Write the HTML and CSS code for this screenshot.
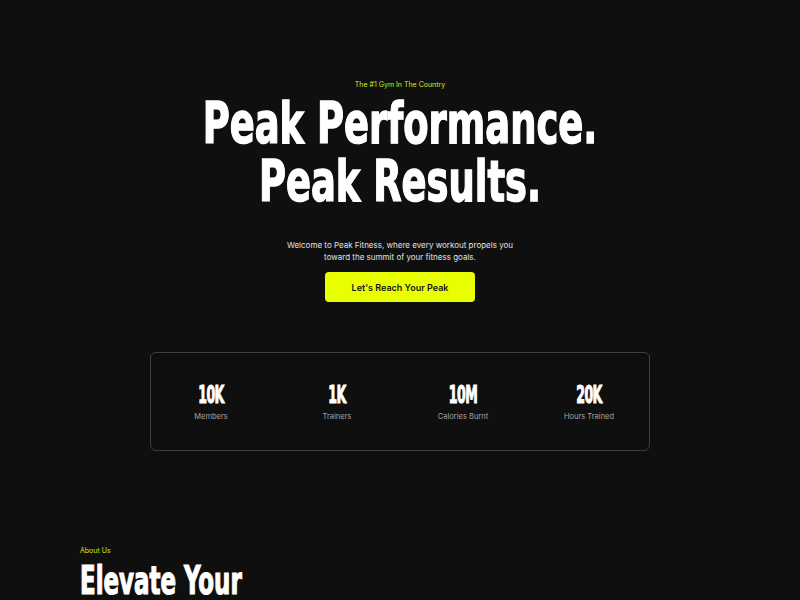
FILE: index.html
```html
<!DOCTYPE html>
<html lang="en">
<head>
<meta charset="utf-8">
<title>Peak Fitness</title>
<link rel="stylesheet" href="styles.css">
</head>
<body>
<section class="hero">
  <p class="eyebrow">The #1 Gym In The Country</p>
  <h1 class="hero-title">
    <span class="line"><span class="stretch">Peak Performance.</span></span>
    <span class="line"><span class="stretch">Peak Results.</span></span>
  </h1>
  <p class="lead">Welcome to Peak Fitness, where every workout propels you<br>toward the summit of your fitness goals.</p>
  <a class="cta" href="#">Let's Reach Your Peak</a>
  <div class="stats">
    <div class="stat"><span class="num"><span class="stretch">10K</span></span><span class="label">Members</span></div>
    <div class="stat"><span class="num"><span class="stretch">1K</span></span><span class="label">Trainers</span></div>
    <div class="stat"><span class="num"><span class="stretch">10M</span></span><span class="label">Calories Burnt</span></div>
    <div class="stat"><span class="num"><span class="stretch">20K</span></span><span class="label">Hours Trained</span></div>
  </div>
</section>
<section class="about">
  <p class="eyebrow">About Us</p>
  <h2 class="about-title"><span class="stretch">Elevate Your</span></h2>
</section>
</body>
</html>
```
FILE: styles.css
```css
* { box-sizing: border-box; }
html, body { margin: 0; padding: 0; }
body {
  background: #0f0f0f;
  color: #fff;
  font-family: Inter, "Liberation Sans", sans-serif;
  overflow: hidden;
}
.hero {
  display: flex;
  flex-direction: column;
  align-items: center;
  padding-top: 80px;
}
.eyebrow {
  margin: 0;
  font-size: 7px;
  line-height: 10px;
  color: #cfe81c;
}
.stretch {
  display: inline-block;
  font-family: "DejaVu Sans Condensed", "DejaVu Sans", sans-serif;
  font-weight: bold;
  -webkit-text-stroke: 0.6px currentColor;
}
.hero-title {
  margin: 3px 0 0;
  text-align: center;
  font-weight: bold;
}
.hero-title .line {
  display: block;
  height: 58px;
  line-height: 58px;
  font-size: 41px;
}
.hero-title .stretch {
  transform: scaleY(1.4);
  letter-spacing: 0;
  -webkit-text-stroke: 1px #fff;
}
.lead {
  margin: 30px 0 0;
  font-size: 8px;
  line-height: 12px;
  color: #e2e2e2;
  text-align: center;
}
.cta {
  margin-top: 9px;
  width: 150px;
  height: 30px;
  display: flex;
  align-items: center;
  justify-content: center;
  background: #e8ff00;
  color: #141414;
  border-radius: 4px;
  font-size: 9px;
  font-weight: 600;
  text-decoration: none;
}
.stats {
  margin-top: 50px;
  width: 500px;
  height: 99px;
  border: 1px solid #3f3f3f;
  border-radius: 6px;
  display: grid;
  grid-template-columns: repeat(4, 126px);
  justify-content: center;
  align-content: center;
}
.stat {
  display: flex;
  flex-direction: column;
  align-items: center;
}
.num {
  height: 24px;
  line-height: 24px;
  font-size: 14px;
}
.num .stretch {
  transform: scaleY(1.75);
  letter-spacing: -0.6px;
}
.label {
  margin-top: 6px;
  font-size: 7.5px;
  line-height: 10px;
  color: #a3a3a3;
}
.about {
  margin-top: 95px;
  padding-left: 80px;
}
.about-title {
  margin: 6px 0 0;
  height: 36px;
  line-height: 36px;
  font-size: 25.5px;
}
.about-title .stretch {
  transform: scaleY(1.5);
  transform-origin: left center;
  -webkit-text-stroke: 0.8px #fff;
}
```
